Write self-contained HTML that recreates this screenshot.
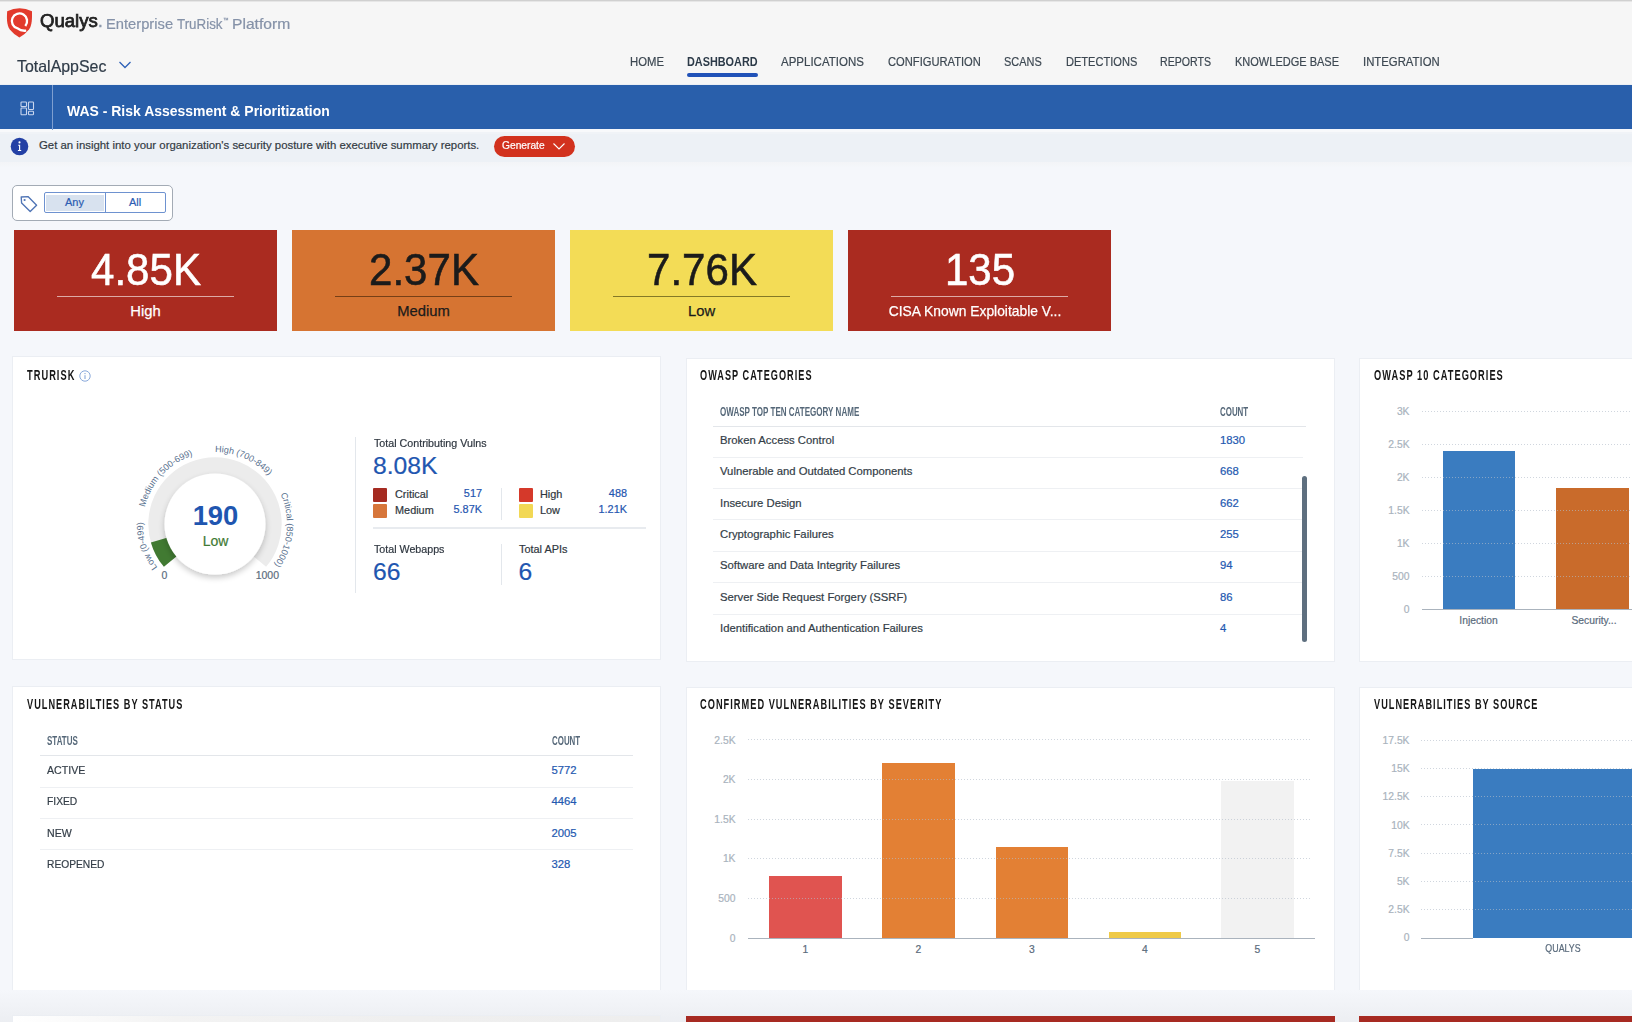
<!DOCTYPE html>
<html><head><meta charset="utf-8"><title>WAS - Risk Assessment</title><style>
*{box-sizing:border-box;margin:0;padding:0}
html,body{width:1632px;height:1022px;overflow:hidden;background:#f5f7fb;font-family:"Liberation Sans",sans-serif;position:relative}
.t{position:absolute;white-space:nowrap}
svg{position:absolute}
</style></head><body>
<div class="t" style="left:0px;top:0px;width:1632px;height:85px;background:#f6f6f6;"></div>
<div class="t" style="left:0px;top:0px;width:1632px;height:1px;background:#d0d0d0;"></div>
<div class="t" style="left:0px;top:1px;width:1632px;height:1px;background:#e6e6e6;"></div>
<svg style="left:0;top:0" width="40" height="40" viewBox="0 0 40 40">
<path d="M7.2 11.2 Q19.6 5.2 32 11.2 C32.1 18 32.2 25 29 29.5 Q25.5 34 19.4 37.4 Q13.3 34 9.8 29.5 C6.6 25 6.7 18 7.2 11.2 Z" fill="#e23a2c"/>
<path d="M25.3 25.9 A7.6 7.6 0 1 0 17.6 28.4 Q21 31.2 26.2 30.6" fill="none" stroke="#fff" stroke-width="2.4"/>
<circle cx="19.4" cy="20.9" r="5.9" fill="#e23a2c"/>
</svg>
<div class="t" style="top:13.23px;font-size:17.8px;line-height:17.8px;color:#222222;left:39.5px;transform:scaleX(1.045);transform-origin:0 0;-webkit-text-stroke:0.75px #222222;">Qualys<span style="color:#8b97ab;-webkit-text-stroke:0.3px #8b97ab">.</span></div>
<div class="t" style="top:17.10px;font-size:14.3px;line-height:14.3px;color:#8592a8;-webkit-text-stroke:0.2px #8592a8;left:105.7px;transform:scaleX(1.0297283247725726);transform-origin:0 0;">Enterprise</div>
<div class="t" style="top:17.10px;font-size:14.3px;line-height:14.3px;color:#8592a8;-webkit-text-stroke:0.2px #8592a8;left:176.6px;transform:scaleX(0.935);transform-origin:0 0;">TruRisk</div>
<div class="t" style="top:16.92px;font-size:6px;line-height:6px;color:#8592a8;-webkit-text-stroke:0.2px #8592a8;left:223px;transform:scaleX(0.9);transform-origin:0 0;">&#8482;</div>
<div class="t" style="top:17.10px;font-size:14.3px;line-height:14.3px;color:#8592a8;-webkit-text-stroke:0.2px #8592a8;left:232.3px;transform:scaleX(1.0948123991393222);transform-origin:0 0;">Platform</div>
<div class="t" style="top:58.03px;font-size:16.5px;line-height:16.5px;color:#2f3b48;-webkit-text-stroke:0.2px #2f3b48;left:17px;transform:scaleX(0.965);transform-origin:0 0;">TotalAppSec</div>
<svg style="left:117px;top:59px" width="16" height="12" viewBox="0 0 16 12"><path d="M2.5 3 L8 8.5 L13.5 3" stroke="#2f62b8" stroke-width="1.3" fill="none"/></svg>
<div class="t" style="top:56.30px;font-size:12.4px;line-height:12.4px;color:#3d4852;-webkit-text-stroke:0.2px #3d4852;left:630px;transform:scaleX(0.9135);transform-origin:0 0;">HOME</div>
<div class="t" style="top:56.30px;font-size:12.4px;line-height:12.4px;color:#2c3a48;font-weight:bold;left:687px;transform:scaleX(0.8765);transform-origin:0 0;">DASHBOARD</div>
<div class="t" style="top:56.30px;font-size:12.4px;line-height:12.4px;color:#3d4852;-webkit-text-stroke:0.2px #3d4852;left:781px;transform:scaleX(0.9281);transform-origin:0 0;">APPLICATIONS</div>
<div class="t" style="top:56.30px;font-size:12.4px;line-height:12.4px;color:#3d4852;-webkit-text-stroke:0.2px #3d4852;left:888px;transform:scaleX(0.901);transform-origin:0 0;">CONFIGURATION</div>
<div class="t" style="top:56.30px;font-size:12.4px;line-height:12.4px;color:#3d4852;-webkit-text-stroke:0.2px #3d4852;left:1004px;transform:scaleX(0.8837);transform-origin:0 0;">SCANS</div>
<div class="t" style="top:56.30px;font-size:12.4px;line-height:12.4px;color:#3d4852;-webkit-text-stroke:0.2px #3d4852;left:1066px;transform:scaleX(0.8925);transform-origin:0 0;">DETECTIONS</div>
<div class="t" style="top:56.30px;font-size:12.4px;line-height:12.4px;color:#3d4852;-webkit-text-stroke:0.2px #3d4852;left:1160px;transform:scaleX(0.8567);transform-origin:0 0;">REPORTS</div>
<div class="t" style="top:56.30px;font-size:12.4px;line-height:12.4px;color:#3d4852;-webkit-text-stroke:0.2px #3d4852;left:1235px;transform:scaleX(0.8889);transform-origin:0 0;">KNOWLEDGE BASE</div>
<div class="t" style="top:56.30px;font-size:12.4px;line-height:12.4px;color:#3d4852;-webkit-text-stroke:0.2px #3d4852;left:1362.5px;transform:scaleX(0.9157);transform-origin:0 0;">INTEGRATION</div>
<div class="t" style="left:687px;top:73px;width:71px;height:3.5px;background:#2152b8;border-radius:2px"></div>
<div class="t" style="left:0px;top:83.5px;width:1632px;height:1.5px;background:#eceff3;"></div>
<div class="t" style="left:0px;top:85.2px;width:1632px;height:44.3px;background:#295fab;"></div>
<div class="t" style="left:52px;top:85px;width:1px;height:45px;background:#7f9fd0;"></div>
<svg style="left:20px;top:101px" width="15" height="15" viewBox="0 0 15 15" fill="none" stroke="#c9d6ee" stroke-width="1.1">
<rect x="1" y="1" width="5.5" height="4.5" rx="0.8"/><rect x="1" y="7" width="5.5" height="6.8" rx="0.8"/><rect x="8.5" y="1" width="5" height="7.5" rx="0.8"/><rect x="8.5" y="10.3" width="5" height="3.5" rx="0.8"/>
</svg>
<div class="t" style="top:103.98px;font-size:14.2px;line-height:14.2px;color:#ffffff;font-weight:bold;left:67px;transform:scaleX(0.985);transform-origin:0 0;">WAS - Risk Assessment &amp; Prioritization</div>
<div class="t" style="left:0px;top:129.5px;width:1632px;height:2px;background:#f8f9fb;"></div>
<div class="t" style="left:0px;top:131.5px;width:1632px;height:2px;background:#f0f3f7;"></div>
<div class="t" style="left:0px;top:133.5px;width:1632px;height:28.5px;background:#edf1f6;"></div>
<div class="t" style="left:0;top:162px;width:1632px;height:6px;background:linear-gradient(#f3f4f7,#f5f7fb)"></div>
<svg style="left:10px;top:137px" width="19" height="19" viewBox="0 0 19 19"><circle cx="9.5" cy="9.5" r="8.8" fill="#2340a5"/>
<circle cx="9.5" cy="5.4" r="1.05" fill="#fff"/><path d="M8.2 8.2 H9.6 V13.5 M7.9 13.5 H11.2" stroke="#fff" stroke-width="1.15" fill="none"/></svg>
<div class="t" style="top:139.85px;font-size:11.4px;line-height:11.4px;color:#333b44;-webkit-text-stroke:0.2px #333b44;left:39px;">Get an insight into your organization's security posture with executive summary reports.</div>
<div class="t" style="left:494px;top:136px;width:81px;height:21px;background:#d2321e;border-radius:11px"></div>
<div class="t" style="top:140.09px;font-size:11px;line-height:11px;color:#fff;-webkit-text-stroke:0.2px #fff;left:501.5px;transform:scaleX(0.93);transform-origin:0 0;">Generate</div>
<svg style="left:552px;top:142px" width="14" height="9" viewBox="0 0 14 9"><path d="M1.5 1.5 L7 7 L12.5 1.5" stroke="#fff" stroke-width="1.1" fill="none"/></svg>
<div class="t" style="left:12px;top:185px;width:160.5px;height:35.5px;background:#ffffff;border:1px solid #a3abb5;border-radius:5px"></div>
<svg style="left:18.5px;top:194px" width="20" height="20" viewBox="0 0 20 20"><path d="M2.2 3 L9 2.6 L17.6 11.2 L11.2 17.6 L2.6 9 Z" fill="none" stroke="#4f74b5" stroke-width="1.35" stroke-linejoin="round"/><circle cx="5.6" cy="6" r="1.1" fill="#4f74b5"/></svg>
<div class="t" style="left:44px;top:192px;width:122px;height:21px;background:#ffffff;border:1px solid #6e92d0;border-radius:2px"></div>
<div class="t" style="left:46px;top:194.8px;width:57.5px;height:15.8px;background:#d8e2ef;"></div>
<div class="t" style="left:104.5px;top:193px;width:1px;height:19px;background:#6e92d0;"></div>
<div class="t" style="top:197.19px;font-size:11px;line-height:11px;color:#2c5db2;-webkit-text-stroke:0.2px #2c5db2;left:-325.5px;width:800px;text-align:center;">Any</div>
<div class="t" style="top:197.19px;font-size:11px;line-height:11px;color:#2c5db2;-webkit-text-stroke:0.2px #2c5db2;left:-265px;width:800px;text-align:center;">All</div>
<div class="t" style="left:14px;top:230px;width:263px;height:100.5px;background:#aa2b20;"></div>
<div class="t" style="top:247.31px;font-size:45px;line-height:45px;color:#ffffff;left:-254.5px;width:800px;text-align:center;transform:scaleX(0.935);transform-origin:400px 0;-webkit-text-stroke:0.6px #ffffff;">4.85K</div>
<div class="t" style="left:57px;top:295.5px;width:177px;height:1px;background:rgba(255,255,255,0.6);"></div>
<div class="t" style="top:303.67px;font-size:14.8px;line-height:14.8px;color:#ffffff;left:-254.5px;width:800px;text-align:center;transform:scaleX(1);transform-origin:400px 0;-webkit-text-stroke:0.25px #ffffff;">High</div>
<div class="t" style="left:292px;top:230px;width:263px;height:100.5px;background:#d67432;"></div>
<div class="t" style="top:247.31px;font-size:45px;line-height:45px;color:#1b1b1b;left:23.5px;width:800px;text-align:center;transform:scaleX(0.935);transform-origin:400px 0;-webkit-text-stroke:0.6px #1b1b1b;">2.37K</div>
<div class="t" style="left:335px;top:295.5px;width:177px;height:1px;background:rgba(40,20,0,0.55);"></div>
<div class="t" style="top:303.67px;font-size:14.8px;line-height:14.8px;color:#1b1b1b;left:23.5px;width:800px;text-align:center;transform:scaleX(1);transform-origin:400px 0;-webkit-text-stroke:0.25px #1b1b1b;">Medium</div>
<div class="t" style="left:570px;top:230px;width:263px;height:100.5px;background:#f3dc56;"></div>
<div class="t" style="top:247.31px;font-size:45px;line-height:45px;color:#1b1b1b;left:301.5px;width:800px;text-align:center;transform:scaleX(0.935);transform-origin:400px 0;-webkit-text-stroke:0.6px #1b1b1b;">7.76K</div>
<div class="t" style="left:613px;top:295.5px;width:177px;height:1px;background:rgba(40,40,0,0.55);"></div>
<div class="t" style="top:303.67px;font-size:14.8px;line-height:14.8px;color:#1b1b1b;left:301.5px;width:800px;text-align:center;transform:scaleX(1);transform-origin:400px 0;-webkit-text-stroke:0.25px #1b1b1b;">Low</div>
<div class="t" style="left:848px;top:230px;width:263px;height:100.5px;background:#aa2b20;"></div>
<div class="t" style="top:247.31px;font-size:45px;line-height:45px;color:#ffffff;left:579.5px;width:800px;text-align:center;transform:scaleX(0.935);transform-origin:400px 0;-webkit-text-stroke:0.6px #ffffff;">135</div>
<div class="t" style="left:891px;top:295.5px;width:177px;height:1px;background:rgba(255,255,255,0.6);"></div>
<div class="t" style="top:303.67px;font-size:14.8px;line-height:14.8px;color:#ffffff;left:575.2px;width:800px;text-align:center;transform:scaleX(0.935);transform-origin:400px 0;-webkit-text-stroke:0.25px #ffffff;">CISA Known Exploitable V...</div>
<div class="t" style="left:12px;top:356px;width:649px;height:304px;background:#ffffff;border:1px solid #ebeef3"></div>
<div class="t" style="left:685.5px;top:357.5px;width:649px;height:304px;background:#ffffff;border:1px solid #ebeef3"></div>
<div class="t" style="left:1359px;top:357.5px;width:300px;height:304px;background:#ffffff;border:1px solid #ebeef3"></div>
<div class="t" style="left:12px;top:685.5px;width:649px;height:305px;background:#ffffff;border:1px solid #ebeef3"></div>
<div class="t" style="left:685.5px;top:686.5px;width:649px;height:305px;background:#ffffff;border:1px solid #ebeef3"></div>
<div class="t" style="left:1359px;top:686.5px;width:300px;height:305px;background:#ffffff;border:1px solid #ebeef3"></div>
<div class="t" style="left:0;top:990px;width:1632px;height:32px;background:linear-gradient(#f5f7fb,#eceef2)"></div>
<div class="t" style="left:12px;top:1015px;width:649px;height:30px;background:#ffffff;border:1px solid #ebeef3"></div>
<div class="t" style="left:13px;top:1016px;width:647px;height:10px;background:linear-gradient(90deg,#ffffff 0%,#f3f3f3 25%,#efefef 60%,#eeeeee 100%);"></div>
<div class="t" style="left:685.5px;top:1016px;width:649px;height:10px;background:#a72a22;"></div>
<div class="t" style="left:1359px;top:1016px;width:300px;height:10px;background:#a72a22;"></div>
<div class="t" style="top:367.33px;font-size:15.2px;line-height:15.2px;color:#161616;font-weight:bold;letter-spacing:1.7px;left:27px;transform:scaleX(0.609833962053645);transform-origin:0 0;">TRURISK</div>
<svg style="left:79px;top:369.5px" width="12" height="12" viewBox="0 0 12 12"><circle cx="6" cy="6" r="5.2" fill="none" stroke="#7d9fd6" stroke-width="0.9"/><circle cx="6" cy="3.6" r="0.7" fill="#7d9fd6"/><path d="M6 5.2 V9" stroke="#7d9fd6" stroke-width="1"/></svg>
<div class="t" style="top:367.33px;font-size:15.2px;line-height:15.2px;color:#161616;font-weight:bold;letter-spacing:1.7px;left:700px;transform:scaleX(0.6018315287768097);transform-origin:0 0;">OWASP CATEGORIES</div>
<div class="t" style="top:367.33px;font-size:15.2px;line-height:15.2px;color:#161616;font-weight:bold;letter-spacing:1.7px;left:1374px;transform:scaleX(0.6089144928813073);transform-origin:0 0;">OWASP 10 CATEGORIES</div>
<div class="t" style="top:696.43px;font-size:15.2px;line-height:15.2px;color:#161616;font-weight:bold;letter-spacing:1.7px;left:27px;transform:scaleX(0.6037611356911026);transform-origin:0 0;">VULNERABILTIES BY STATUS</div>
<div class="t" style="top:696.43px;font-size:15.2px;line-height:15.2px;color:#161616;font-weight:bold;letter-spacing:1.7px;left:700px;transform:scaleX(0.6068253887027804);transform-origin:0 0;">CONFIRMED VULNERABILITIES BY SEVERITY</div>
<div class="t" style="top:696.43px;font-size:15.2px;line-height:15.2px;color:#161616;font-weight:bold;letter-spacing:1.7px;left:1374px;transform:scaleX(0.6032250991388175);transform-origin:0 0;">VULNERABILITIES BY SOURCE</div>
<svg style="left:0;top:0" width="700" height="700" viewBox="0 0 700 700">
<defs><filter id="sh" x="-30%" y="-30%" width="160%" height="160%"><feGaussianBlur in="SourceAlpha" stdDeviation="3"/><feOffset dy="3"/><feComponentTransfer><feFuncA type="linear" slope="0.22"/></feComponentTransfer><feMerge><feMergeNode/><feMergeNode in="SourceGraphic"/></feMerge></filter>
<path id="la1" d="M157.50 567.33 A72 72 0 0 1 152.65 488.00"/>
<path id="la2" d="M144.99 507.19 A72 72 0 0 1 202.50 453.09"/>
<path id="la3" d="M215.00 452.00 A72 72 0 0 1 278.57 490.20"/>
<path id="la4" d="M280.52 494.14 A72 72 0 0 1 261.28 579.16"/>
</defs>
<path d="M163.90 566.87 A66.7 66.7 0 1 1 266.10 566.87 L253.30 556.14 A50 50 0 1 0 176.70 556.14 Z" fill="#ececec"/>
<path d="M163.90 566.87 A66.7 66.7 0 0 1 150.88 542.39 L166.94 537.78 A50 50 0 0 0 176.70 556.14 Z" fill="#417a32"/>
<circle cx="215" cy="524" r="50.5" fill="#ffffff" filter="url(#sh)"/>
<g font-family="Liberation Sans" font-size="9" fill="#58708e">
<text><textPath href="#la1">Low (0-499)</textPath></text>
<text><textPath href="#la2">Medium (500-699)</textPath></text>
<text><textPath href="#la3">High (700-849)</textPath></text>
<text><textPath href="#la4">Critical (850-1000)</textPath></text>
</g></svg>
<div class="t" style="top:502.41px;font-size:27.4px;line-height:27.4px;color:#1f56b0;font-weight:bold;left:-184.5px;width:800px;text-align:center;">190</div>
<div class="t" style="top:533.55px;font-size:14px;line-height:14px;color:#3f7a34;-webkit-text-stroke:0.2px #3f7a34;left:-184.5px;width:800px;text-align:center;">Low</div>
<div class="t" style="top:570.41px;font-size:10.5px;line-height:10.5px;color:#5d6d7e;-webkit-text-stroke:0.2px #5d6d7e;left:-235.7px;width:800px;text-align:center;">0</div>
<div class="t" style="top:570.41px;font-size:10.5px;line-height:10.5px;color:#5d6d7e;-webkit-text-stroke:0.2px #5d6d7e;left:-132.7px;width:800px;text-align:center;">1000</div>
<div class="t" style="left:355px;top:436.5px;width:1px;height:156px;background:#e3e7ec;"></div>
<div class="t" style="top:438.27px;font-size:10.9px;line-height:10.9px;color:#2f3740;-webkit-text-stroke:0.2px #2f3740;left:374px;transform:scaleX(0.982);transform-origin:0 0;">Total Contributing Vulns</div>
<div class="t" style="top:453.79px;font-size:24.7px;line-height:24.7px;color:#1f56b0;-webkit-text-stroke:0.2px #1f56b0;left:373px;">8.08K</div>
<div class="t" style="left:373.3px;top:488px;width:14px;height:13.5px;background:#a52b21;border-radius:1px"></div>
<div class="t" style="left:373.3px;top:504px;width:14px;height:13.5px;background:#d7763a;border-radius:1px"></div>
<div class="t" style="top:489.17px;font-size:10.9px;line-height:10.9px;color:#2f3740;-webkit-text-stroke:0.2px #2f3740;left:395px;">Critical</div>
<div class="t" style="top:504.97px;font-size:10.9px;line-height:10.9px;color:#2f3740;-webkit-text-stroke:0.2px #2f3740;left:395px;">Medium</div>
<div class="t" style="top:487.77px;font-size:10.9px;line-height:10.9px;color:#1f56b0;-webkit-text-stroke:0.2px #1f56b0;left:-318px;width:800px;text-align:right;">517</div>
<div class="t" style="top:503.77px;font-size:10.9px;line-height:10.9px;color:#1f56b0;-webkit-text-stroke:0.2px #1f56b0;left:-318px;width:800px;text-align:right;">5.87K</div>
<div class="t" style="left:500.5px;top:488px;width:1px;height:31.5px;background:#e3e7ec;"></div>
<div class="t" style="left:518.8px;top:488px;width:14px;height:13.5px;background:#d5392a;border-radius:1px"></div>
<div class="t" style="left:518.8px;top:504px;width:14px;height:13.5px;background:#f2d855;border-radius:1px"></div>
<div class="t" style="top:489.17px;font-size:10.9px;line-height:10.9px;color:#2f3740;-webkit-text-stroke:0.2px #2f3740;left:540px;">High</div>
<div class="t" style="top:504.97px;font-size:10.9px;line-height:10.9px;color:#2f3740;-webkit-text-stroke:0.2px #2f3740;left:540px;">Low</div>
<div class="t" style="top:487.77px;font-size:10.9px;line-height:10.9px;color:#1f56b0;-webkit-text-stroke:0.2px #1f56b0;left:-173px;width:800px;text-align:right;">488</div>
<div class="t" style="top:503.77px;font-size:10.9px;line-height:10.9px;color:#1f56b0;-webkit-text-stroke:0.2px #1f56b0;left:-173px;width:800px;text-align:right;">1.21K</div>
<div class="t" style="left:373px;top:527px;width:273px;height:1.5px;background:#e8ebef;"></div>
<div class="t" style="top:544.27px;font-size:10.9px;line-height:10.9px;color:#2f3740;-webkit-text-stroke:0.2px #2f3740;left:374px;transform:scaleX(0.98);transform-origin:0 0;">Total Webapps</div>
<div class="t" style="top:559.79px;font-size:24.7px;line-height:24.7px;color:#1f56b0;-webkit-text-stroke:0.2px #1f56b0;left:373px;">66</div>
<div class="t" style="left:500.5px;top:543.5px;width:1px;height:41px;background:#e3e7ec;"></div>
<div class="t" style="top:544.27px;font-size:10.9px;line-height:10.9px;color:#2f3740;-webkit-text-stroke:0.2px #2f3740;left:519px;">Total APIs</div>
<div class="t" style="top:559.79px;font-size:24.7px;line-height:24.7px;color:#1f56b0;-webkit-text-stroke:0.2px #1f56b0;left:518.5px;">6</div>
<div class="t" style="top:406.33px;font-size:12.6px;line-height:12.6px;color:#566879;font-weight:bold;left:720px;transform:scaleX(0.63848685);transform-origin:0 0;">OWASP TOP TEN CATEGORY NAME</div>
<div class="t" style="top:406.33px;font-size:12.6px;line-height:12.6px;color:#566879;font-weight:bold;left:1220px;transform:scaleX(0.629021);transform-origin:0 0;">COUNT</div>
<div class="t" style="left:713px;top:425.5px;width:593px;height:1.5px;background:#e3e6ea;"></div>
<div class="t" style="top:434.73px;font-size:11.3px;line-height:11.3px;color:#333d47;-webkit-text-stroke:0.2px #333d47;left:720px;">Broken Access Control</div>
<div class="t" style="top:434.73px;font-size:11.3px;line-height:11.3px;color:#2358b0;-webkit-text-stroke:0.2px #2358b0;left:1220px;">1830</div>
<div class="t" style="left:713px;top:456.5px;width:590px;height:1px;background:#eef0f3;"></div>
<div class="t" style="top:466.13px;font-size:11.3px;line-height:11.3px;color:#333d47;-webkit-text-stroke:0.2px #333d47;left:720px;">Vulnerable and Outdated Components</div>
<div class="t" style="top:466.13px;font-size:11.3px;line-height:11.3px;color:#2358b0;-webkit-text-stroke:0.2px #2358b0;left:1220px;">668</div>
<div class="t" style="left:713px;top:487.9px;width:590px;height:1px;background:#eef0f3;"></div>
<div class="t" style="top:497.53px;font-size:11.3px;line-height:11.3px;color:#333d47;-webkit-text-stroke:0.2px #333d47;left:720px;">Insecure Design</div>
<div class="t" style="top:497.53px;font-size:11.3px;line-height:11.3px;color:#2358b0;-webkit-text-stroke:0.2px #2358b0;left:1220px;">662</div>
<div class="t" style="left:713px;top:519.3px;width:590px;height:1px;background:#eef0f3;"></div>
<div class="t" style="top:528.93px;font-size:11.3px;line-height:11.3px;color:#333d47;-webkit-text-stroke:0.2px #333d47;left:720px;">Cryptographic Failures</div>
<div class="t" style="top:528.93px;font-size:11.3px;line-height:11.3px;color:#2358b0;-webkit-text-stroke:0.2px #2358b0;left:1220px;">255</div>
<div class="t" style="left:713px;top:550.7px;width:590px;height:1px;background:#eef0f3;"></div>
<div class="t" style="top:560.33px;font-size:11.3px;line-height:11.3px;color:#333d47;-webkit-text-stroke:0.2px #333d47;left:720px;">Software and Data Integrity Failures</div>
<div class="t" style="top:560.33px;font-size:11.3px;line-height:11.3px;color:#2358b0;-webkit-text-stroke:0.2px #2358b0;left:1220px;">94</div>
<div class="t" style="left:713px;top:582.1px;width:590px;height:1px;background:#eef0f3;"></div>
<div class="t" style="top:591.73px;font-size:11.3px;line-height:11.3px;color:#333d47;-webkit-text-stroke:0.2px #333d47;left:720px;">Server Side Request Forgery (SSRF)</div>
<div class="t" style="top:591.73px;font-size:11.3px;line-height:11.3px;color:#2358b0;-webkit-text-stroke:0.2px #2358b0;left:1220px;">86</div>
<div class="t" style="left:713px;top:613.5px;width:590px;height:1px;background:#eef0f3;"></div>
<div class="t" style="top:623.13px;font-size:11.3px;line-height:11.3px;color:#333d47;-webkit-text-stroke:0.2px #333d47;left:720px;">Identification and Authentication Failures</div>
<div class="t" style="top:623.13px;font-size:11.3px;line-height:11.3px;color:#2358b0;-webkit-text-stroke:0.2px #2358b0;left:1220px;">4</div>
<div class="t" style="left:1301.5px;top:475.5px;width:5.5px;height:166px;background:#5e6f7f;border-radius:3px"></div>
<div class="t" style="top:735.33px;font-size:12.6px;line-height:12.6px;color:#566879;font-weight:bold;left:46.5px;transform:scaleX(0.635128);transform-origin:0 0;">STATUS</div>
<div class="t" style="top:735.33px;font-size:12.6px;line-height:12.6px;color:#566879;font-weight:bold;left:551.5px;transform:scaleX(0.629021);transform-origin:0 0;">COUNT</div>
<div class="t" style="left:40px;top:754.5px;width:593px;height:1.5px;background:#e3e6ea;"></div>
<div class="t" style="top:764.73px;font-size:11.3px;line-height:11.3px;color:#333d47;-webkit-text-stroke:0.2px #333d47;left:46.5px;transform:scaleX(0.94);transform-origin:0 0;">ACTIVE</div>
<div class="t" style="top:764.73px;font-size:11.3px;line-height:11.3px;color:#2358b0;-webkit-text-stroke:0.2px #2358b0;left:551.5px;">5772</div>
<div class="t" style="left:40px;top:786.5px;width:593px;height:1px;background:#eef0f3;"></div>
<div class="t" style="top:796.18px;font-size:11.3px;line-height:11.3px;color:#333d47;-webkit-text-stroke:0.2px #333d47;left:46.5px;transform:scaleX(0.91);transform-origin:0 0;">FIXED</div>
<div class="t" style="top:796.18px;font-size:11.3px;line-height:11.3px;color:#2358b0;-webkit-text-stroke:0.2px #2358b0;left:551.5px;">4464</div>
<div class="t" style="left:40px;top:817.8px;width:593px;height:1px;background:#eef0f3;"></div>
<div class="t" style="top:827.63px;font-size:11.3px;line-height:11.3px;color:#333d47;-webkit-text-stroke:0.2px #333d47;left:46.5px;transform:scaleX(0.94);transform-origin:0 0;">NEW</div>
<div class="t" style="top:827.63px;font-size:11.3px;line-height:11.3px;color:#2358b0;-webkit-text-stroke:0.2px #2358b0;left:551.5px;">2005</div>
<div class="t" style="left:40px;top:849.1px;width:593px;height:1px;background:#eef0f3;"></div>
<div class="t" style="top:859.08px;font-size:11.3px;line-height:11.3px;color:#333d47;-webkit-text-stroke:0.2px #333d47;left:46.5px;transform:scaleX(0.905);transform-origin:0 0;">REOPENED</div>
<div class="t" style="top:859.08px;font-size:11.3px;line-height:11.3px;color:#2358b0;-webkit-text-stroke:0.2px #2358b0;left:551.5px;">328</div>
<div class="t" style="top:604.78px;font-size:10.3px;line-height:10.3px;color:#a9b3bd;-webkit-text-stroke:0.2px #a9b3bd;left:609.5px;width:800px;text-align:right;">0</div>
<div class="t" style="top:571.78px;font-size:10.3px;line-height:10.3px;color:#a9b3bd;-webkit-text-stroke:0.2px #a9b3bd;left:609.5px;width:800px;text-align:right;">500</div>
<div class="t" style="top:538.78px;font-size:10.3px;line-height:10.3px;color:#a9b3bd;-webkit-text-stroke:0.2px #a9b3bd;left:609.5px;width:800px;text-align:right;">1K</div>
<div class="t" style="top:505.78px;font-size:10.3px;line-height:10.3px;color:#a9b3bd;-webkit-text-stroke:0.2px #a9b3bd;left:609.5px;width:800px;text-align:right;">1.5K</div>
<div class="t" style="top:472.78px;font-size:10.3px;line-height:10.3px;color:#a9b3bd;-webkit-text-stroke:0.2px #a9b3bd;left:609.5px;width:800px;text-align:right;">2K</div>
<div class="t" style="top:439.78px;font-size:10.3px;line-height:10.3px;color:#a9b3bd;-webkit-text-stroke:0.2px #a9b3bd;left:609.5px;width:800px;text-align:right;">2.5K</div>
<div class="t" style="top:406.78px;font-size:10.3px;line-height:10.3px;color:#a9b3bd;-webkit-text-stroke:0.2px #a9b3bd;left:609.5px;width:800px;text-align:right;">3K</div>
<div class="t" style="left:1442.5px;top:450.7px;width:72.5px;height:158.3px;background:#3a7cc0;"></div>
<div class="t" style="left:1556px;top:487.7px;width:72.5px;height:121.3px;background:#c96b2b;"></div>
<div class="t" style="left:1421.5px;top:575.50px;width:210.5px;height:1px;background-image:linear-gradient(90deg,rgba(180,190,202,0.62) 34%,transparent 34%);background-size:3px 1px"></div>
<div class="t" style="left:1421.5px;top:542.50px;width:210.5px;height:1px;background-image:linear-gradient(90deg,rgba(180,190,202,0.62) 34%,transparent 34%);background-size:3px 1px"></div>
<div class="t" style="left:1421.5px;top:509.50px;width:210.5px;height:1px;background-image:linear-gradient(90deg,rgba(180,190,202,0.62) 34%,transparent 34%);background-size:3px 1px"></div>
<div class="t" style="left:1421.5px;top:476.50px;width:210.5px;height:1px;background-image:linear-gradient(90deg,rgba(180,190,202,0.62) 34%,transparent 34%);background-size:3px 1px"></div>
<div class="t" style="left:1421.5px;top:443.50px;width:210.5px;height:1px;background-image:linear-gradient(90deg,rgba(180,190,202,0.62) 34%,transparent 34%);background-size:3px 1px"></div>
<div class="t" style="left:1421.5px;top:410.50px;width:210.5px;height:1px;background-image:linear-gradient(90deg,rgba(180,190,202,0.62) 34%,transparent 34%);background-size:3px 1px"></div>
<div class="t" style="left:1421.5px;top:608.5px;width:211px;height:1px;background:#aab3bd;"></div>
<div class="t" style="top:615.78px;font-size:10.3px;line-height:10.3px;color:#5a6b7c;-webkit-text-stroke:0.2px #5a6b7c;left:1078.5px;width:800px;text-align:center;">Injection</div>
<div class="t" style="top:615.78px;font-size:10.3px;line-height:10.3px;color:#5a6b7c;-webkit-text-stroke:0.2px #5a6b7c;left:1194px;width:800px;text-align:center;">Security...</div>
<div class="t" style="top:933.78px;font-size:10.3px;line-height:10.3px;color:#a9b3bd;-webkit-text-stroke:0.2px #a9b3bd;left:-64.5px;width:800px;text-align:right;">0</div>
<div class="t" style="top:894.13px;font-size:10.3px;line-height:10.3px;color:#a9b3bd;-webkit-text-stroke:0.2px #a9b3bd;left:-64.5px;width:800px;text-align:right;">500</div>
<div class="t" style="top:854.48px;font-size:10.3px;line-height:10.3px;color:#a9b3bd;-webkit-text-stroke:0.2px #a9b3bd;left:-64.5px;width:800px;text-align:right;">1K</div>
<div class="t" style="top:814.83px;font-size:10.3px;line-height:10.3px;color:#a9b3bd;-webkit-text-stroke:0.2px #a9b3bd;left:-64.5px;width:800px;text-align:right;">1.5K</div>
<div class="t" style="top:775.18px;font-size:10.3px;line-height:10.3px;color:#a9b3bd;-webkit-text-stroke:0.2px #a9b3bd;left:-64.5px;width:800px;text-align:right;">2K</div>
<div class="t" style="top:735.53px;font-size:10.3px;line-height:10.3px;color:#a9b3bd;-webkit-text-stroke:0.2px #a9b3bd;left:-64.5px;width:800px;text-align:right;">2.5K</div>
<div class="t" style="left:769px;top:876px;width:72.8px;height:62px;background:#e05450;"></div>
<div class="t" style="top:944.58px;font-size:10.3px;line-height:10.3px;color:#5a6b7c;-webkit-text-stroke:0.2px #5a6b7c;left:405.4px;width:800px;text-align:center;">1</div>
<div class="t" style="left:882px;top:763px;width:72.8px;height:175px;background:#e38034;"></div>
<div class="t" style="top:944.58px;font-size:10.3px;line-height:10.3px;color:#5a6b7c;-webkit-text-stroke:0.2px #5a6b7c;left:518.4px;width:800px;text-align:center;">2</div>
<div class="t" style="left:995.5px;top:847px;width:72.8px;height:91px;background:#e38034;"></div>
<div class="t" style="top:944.58px;font-size:10.3px;line-height:10.3px;color:#5a6b7c;-webkit-text-stroke:0.2px #5a6b7c;left:631.9000000000001px;width:800px;text-align:center;">3</div>
<div class="t" style="left:1108.5px;top:931.5px;width:72.8px;height:6.5px;background:#efca48;"></div>
<div class="t" style="top:944.58px;font-size:10.3px;line-height:10.3px;color:#5a6b7c;-webkit-text-stroke:0.2px #5a6b7c;left:744.9000000000001px;width:800px;text-align:center;">4</div>
<div class="t" style="left:1221px;top:780.5px;width:72.8px;height:157.5px;background:#f2f2f2;"></div>
<div class="t" style="top:944.58px;font-size:10.3px;line-height:10.3px;color:#5a6b7c;-webkit-text-stroke:0.2px #5a6b7c;left:857.4000000000001px;width:800px;text-align:center;">5</div>
<div class="t" style="left:748px;top:897.85px;width:564px;height:1px;background-image:linear-gradient(90deg,rgba(180,190,202,0.62) 34%,transparent 34%);background-size:3px 1px"></div>
<div class="t" style="left:748px;top:858.20px;width:564px;height:1px;background-image:linear-gradient(90deg,rgba(180,190,202,0.62) 34%,transparent 34%);background-size:3px 1px"></div>
<div class="t" style="left:748px;top:818.55px;width:564px;height:1px;background-image:linear-gradient(90deg,rgba(180,190,202,0.62) 34%,transparent 34%);background-size:3px 1px"></div>
<div class="t" style="left:748px;top:778.90px;width:564px;height:1px;background-image:linear-gradient(90deg,rgba(180,190,202,0.62) 34%,transparent 34%);background-size:3px 1px"></div>
<div class="t" style="left:748px;top:739.25px;width:564px;height:1px;background-image:linear-gradient(90deg,rgba(180,190,202,0.62) 34%,transparent 34%);background-size:3px 1px"></div>
<div class="t" style="left:748px;top:937.5px;width:567px;height:1px;background:#aab3bd;"></div>
<div class="t" style="top:933.48px;font-size:10.3px;line-height:10.3px;color:#a9b3bd;-webkit-text-stroke:0.2px #a9b3bd;left:609.5px;width:800px;text-align:right;">0</div>
<div class="t" style="top:905.28px;font-size:10.3px;line-height:10.3px;color:#a9b3bd;-webkit-text-stroke:0.2px #a9b3bd;left:609.5px;width:800px;text-align:right;">2.5K</div>
<div class="t" style="top:877.08px;font-size:10.3px;line-height:10.3px;color:#a9b3bd;-webkit-text-stroke:0.2px #a9b3bd;left:609.5px;width:800px;text-align:right;">5K</div>
<div class="t" style="top:848.88px;font-size:10.3px;line-height:10.3px;color:#a9b3bd;-webkit-text-stroke:0.2px #a9b3bd;left:609.5px;width:800px;text-align:right;">7.5K</div>
<div class="t" style="top:820.68px;font-size:10.3px;line-height:10.3px;color:#a9b3bd;-webkit-text-stroke:0.2px #a9b3bd;left:609.5px;width:800px;text-align:right;">10K</div>
<div class="t" style="top:792.48px;font-size:10.3px;line-height:10.3px;color:#a9b3bd;-webkit-text-stroke:0.2px #a9b3bd;left:609.5px;width:800px;text-align:right;">12.5K</div>
<div class="t" style="top:764.28px;font-size:10.3px;line-height:10.3px;color:#a9b3bd;-webkit-text-stroke:0.2px #a9b3bd;left:609.5px;width:800px;text-align:right;">15K</div>
<div class="t" style="top:736.08px;font-size:10.3px;line-height:10.3px;color:#a9b3bd;-webkit-text-stroke:0.2px #a9b3bd;left:609.5px;width:800px;text-align:right;">17.5K</div>
<div class="t" style="left:1473px;top:768.6px;width:159px;height:169.4px;background:#3a7cc0;"></div>
<div class="t" style="left:1421px;top:909.00px;width:211px;height:1px;background-image:linear-gradient(90deg,rgba(180,190,202,0.62) 34%,transparent 34%);background-size:3px 1px"></div>
<div class="t" style="left:1421px;top:880.80px;width:211px;height:1px;background-image:linear-gradient(90deg,rgba(180,190,202,0.62) 34%,transparent 34%);background-size:3px 1px"></div>
<div class="t" style="left:1421px;top:852.60px;width:211px;height:1px;background-image:linear-gradient(90deg,rgba(180,190,202,0.62) 34%,transparent 34%);background-size:3px 1px"></div>
<div class="t" style="left:1421px;top:824.40px;width:211px;height:1px;background-image:linear-gradient(90deg,rgba(180,190,202,0.62) 34%,transparent 34%);background-size:3px 1px"></div>
<div class="t" style="left:1421px;top:796.20px;width:211px;height:1px;background-image:linear-gradient(90deg,rgba(180,190,202,0.62) 34%,transparent 34%);background-size:3px 1px"></div>
<div class="t" style="left:1421px;top:768.00px;width:211px;height:1px;background-image:linear-gradient(90deg,rgba(180,190,202,0.62) 34%,transparent 34%);background-size:3px 1px"></div>
<div class="t" style="left:1421px;top:739.80px;width:211px;height:1px;background-image:linear-gradient(90deg,rgba(180,190,202,0.62) 34%,transparent 34%);background-size:3px 1px"></div>
<div class="t" style="left:1421px;top:937.5px;width:52px;height:1px;background:#aab3bd;"></div>
<div class="t" style="top:944.28px;font-size:10.3px;line-height:10.3px;color:#5a6b7c;-webkit-text-stroke:0.2px #5a6b7c;left:1163.3px;width:800px;text-align:center;transform:scaleX(0.86);transform-origin:400px 0;">QUALYS</div>
</body></html>
